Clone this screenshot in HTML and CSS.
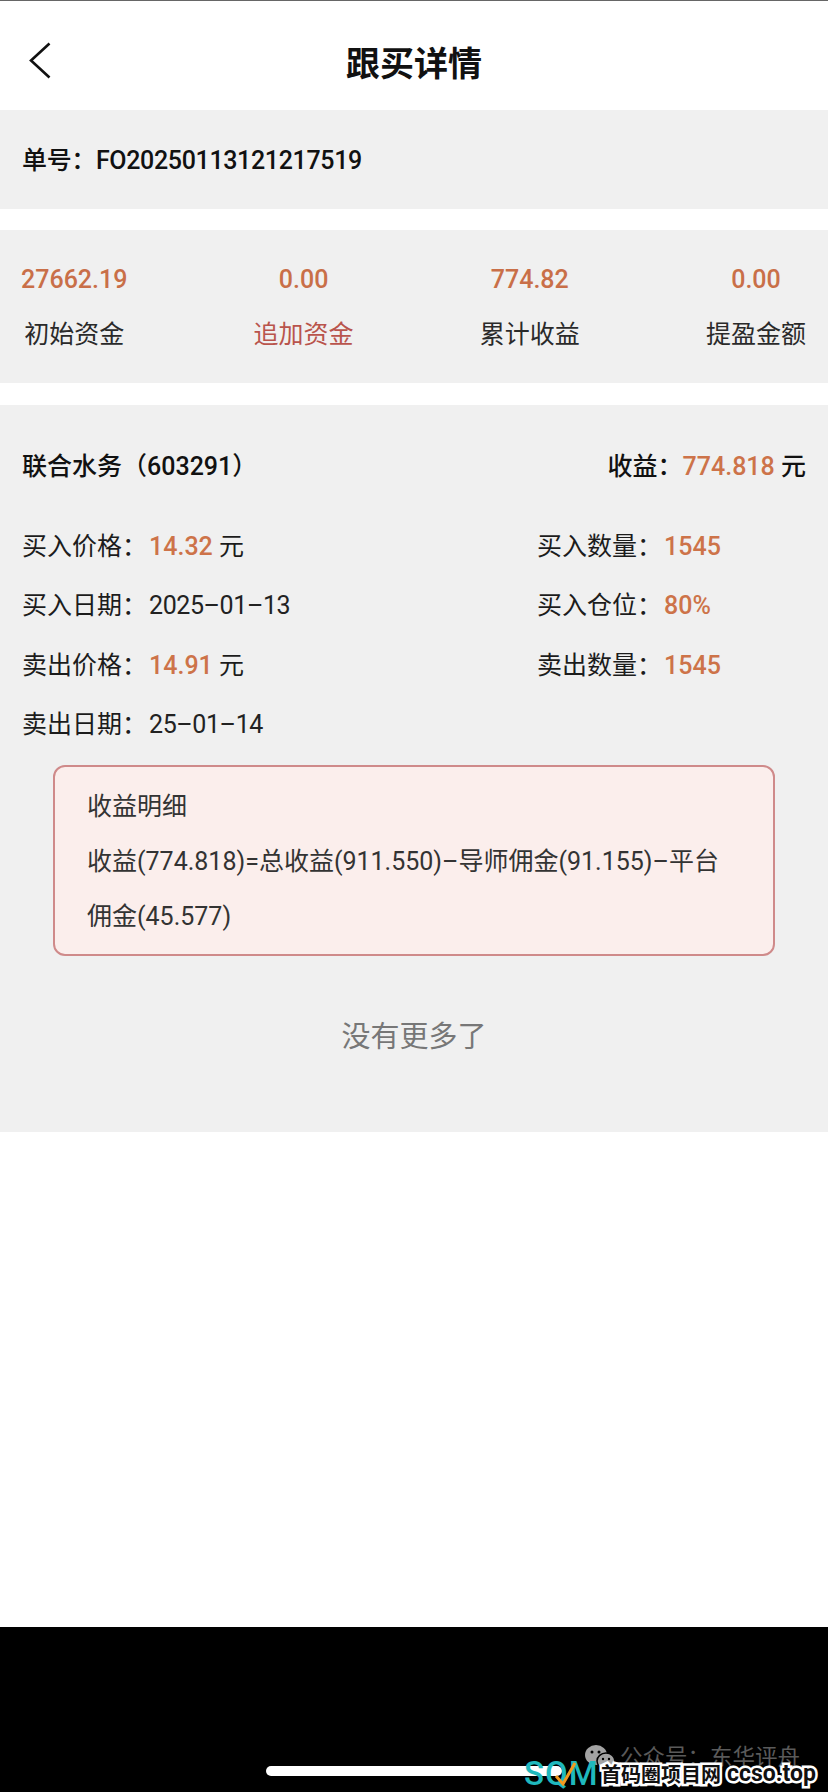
FILE: index.html
```html
<!DOCTYPE html>
<html lang="zh-CN">
<head>
  <meta charset="UTF-8" />
  <meta name="viewport" content="width=device-width, initial-scale=1.0" />
  <title>跟买详情</title>
  <link rel="stylesheet" href="styles.css">
</head>
<body>

  <div class="nav-bar">
    <svg class="back-icon" width="24" height="37" viewBox="0 0 24 37">
      <path d="M21.5 1.5 L3 18.5 L21.5 35.5" fill="none" stroke="#111" stroke-width="2.6" />
    </svg>
    <h1>跟买详情</h1>
  </div>

  <div class="card order-card">单号：FO20250113121217519</div>

  <div class="card stats-card">
    <div class="stat-item">
      <div class="stat-value">27662.19</div>
      <div class="stat-label">初始资金</div>
    </div>
    <div class="stat-item">
      <div class="stat-value">0.00</div>
      <div class="stat-label red">追加资金</div>
    </div>
    <div class="stat-item">
      <div class="stat-value">774.82</div>
      <div class="stat-label">累计收益</div>
    </div>
    <div class="stat-item">
      <div class="stat-value">0.00</div>
      <div class="stat-label">提盈金额</div>
    </div>
  </div>

  <div class="card detail-card">
    <div class="detail-head">
      <div class="stock-name">联合水务（603291）</div>
      <div class="profit">收益：<span class="num">774.818</span> 元</div>
    </div>

    <div class="detail-grid">
      <div class="detail-row">买入价格：<span class="num">14.32</span> 元</div>
      <div class="detail-row">买入数量：<span class="num">1545</span></div>
      <div class="detail-row">买入日期：<span class="date">2025–01–13</span></div>
      <div class="detail-row">买入仓位：<span class="num">80%</span></div>
      <div class="detail-row">卖出价格：<span class="num">14.91</span> 元</div>
      <div class="detail-row">卖出数量：<span class="num">1545</span></div>
      <div class="detail-row">卖出日期：<span class="date">25–01–14</span></div>
    </div>

    <div class="profit-box">
      <div class="box-line">收益明细</div>
      <div class="box-line">收益(774.818)=总收益(911.550)–导师佣金(91.155)–平台佣金(45.577)</div>
    </div>

    <div class="no-more">没有更多了</div>
  </div>

  <div class="blank"></div>

  <div class="bottom-bar">
    <div class="home-bar"></div>

    <div class="mp-mark">
      <svg class="wechat-icon" width="32" height="24" viewBox="0 0 32 24">
        <ellipse cx="12" cy="10" rx="11" ry="10" fill="#a3a3a3" />
        <ellipse cx="22" cy="16" rx="9" ry="8" fill="#a3a3a3" stroke="#000" stroke-width="1.5" />
        <circle cx="8" cy="7" r="1.5" fill="#000" />
        <circle cx="15" cy="7" r="1.5" fill="#000" />
        <circle cx="19" cy="14" r="1.2" fill="#000" />
        <circle cx="25" cy="14" r="1.2" fill="#000" />
      </svg>
      <span>公众号：东华评舟</span>
    </div>

    <div class="site-mark">
      <span class="site-logo">SQM</span>
      <svg class="site-check" width="24" height="26" viewBox="0 0 24 26">
        <path d="M2 15 L9 23 L21 2" fill="none" stroke="#f29a1f" stroke-width="3" />
      </svg>
      <span class="site-name">首码圈项目网</span>
      <span class="site-url">ccso.top</span>
    </div>
  </div>

</body>
</html>
```

FILE: styles.css
```css
* {
  box-sizing: border-box;
}
body {
  margin: 0;
  width: 828px;
  height: 1792px;
  font-family: 'Roboto', 'Noto Sans CJK SC', sans-serif;
  font-size: 25px;
  color: #1c1c1c;
  background-color: #fff;
  display: flex;
  flex-direction: column;
  overflow: hidden;
}
.nav-bar {
  height: 110px;
  border-top: 1px solid #666;
  position: relative;
  display: flex;
  align-items: center;
  justify-content: center;
  flex-shrink: 0;
}
.nav-bar h1 {
  margin: 0 0 -16px;
  font-size: 34px;
  font-weight: 700;
  color: #111;
  line-height: 76px;
}
.back-icon {
  position: absolute;
  left: 28px;
  top: 41px;
}
.card {
  background: #f0f0f0;
}
.order-card {
  height: 99px;
  padding: 1px 22px 0;
  line-height: 99px;
  color: #111;
  font-weight: 500;
  letter-spacing: -0.35px;
}
.stats-card {
  margin-top: 21px;
  height: 153px;
  padding: 1px 22px 0 21px;
  display: flex;
  justify-content: space-between;
}
.stat-item {
  text-align: center;
}
.stat-value {
  margin-top: 26px;
  line-height: 46px;
  color: #c96f48;
  font-weight: 500;
}
.stat-label {
  margin-top: 9px;
  line-height: 46px;
  color: #2a2a2a;
}
.stat-label.red {
  color: #b9544c;
}
.detail-card {
  margin-top: 22px;
  height: 727px;
  padding-top: 41px;
}
.detail-head {
  height: 42px;
  padding: 0 22px;
  line-height: 42px;
  display: flex;
  justify-content: space-between;
  font-weight: 500;
  color: #111;
}
.num {
  color: #cd7349;
  font-weight: 500;
}
.detail-grid {
  margin-top: 29px;
  padding-left: 22px;
  display: grid;
  grid-template-columns: 515px 1fr;
  grid-auto-rows: 59.3px;
}
.detail-row {
  line-height: 59.3px;
}
.detail-row .num {
  margin-left: 2px;
}
.date {
  margin-left: 2px;
  color: #222;
  letter-spacing: -0.4px;
}
.profit-box {
  margin: 11px 53px 0;
  height: 191px;
  padding: 12px 38px 0 32px;
  background: #fbeeec;
  border: 2px solid #cf8a8a;
  border-radius: 12px;
  color: #333;
  line-height: 55px;
}
.no-more {
  margin-top: 52px;
  text-align: center;
  font-size: 29px;
  line-height: 58px;
  color: #777;
}
.blank {
  flex: 1;
}
.bottom-bar {
  height: 165px;
  flex-shrink: 0;
  background: #000;
  position: relative;
}
.home-bar {
  position: absolute;
  left: 266px;
  top: 139px;
  width: 296px;
  height: 10px;
  border-radius: 5px;
  background: #fff;
}
.mp-mark {
  position: absolute;
  left: 584px;
  top: 115px;
  display: flex;
  align-items: center;
  color: #5a5a5a;
  font-size: 22.5px;
  line-height: 30px;
}
.wechat-icon {
  margin-right: 4px;
}
.site-mark {
  position: absolute;
  left: 524px;
  top: 131px;
  height: 30px;
  display: flex;
  align-items: center;
  white-space: nowrap;
}
.site-logo {
  width: 72px;
  font-size: 33px;
  font-weight: 500;
  color: #1fb8bd;
  letter-spacing: 1px;
}
.site-check {
  position: absolute;
  left: 30px;
  top: 3px;
}
.site-name,
.site-url {
  font-weight: 700;
  color: #111;
  -webkit-text-stroke: 5px #fff;
  paint-order: stroke fill;
}
.site-name {
  font-size: 20px;
  margin-left: 5px;
}
.site-url {
  font-size: 23px;
  margin-left: 6px;
}
```
